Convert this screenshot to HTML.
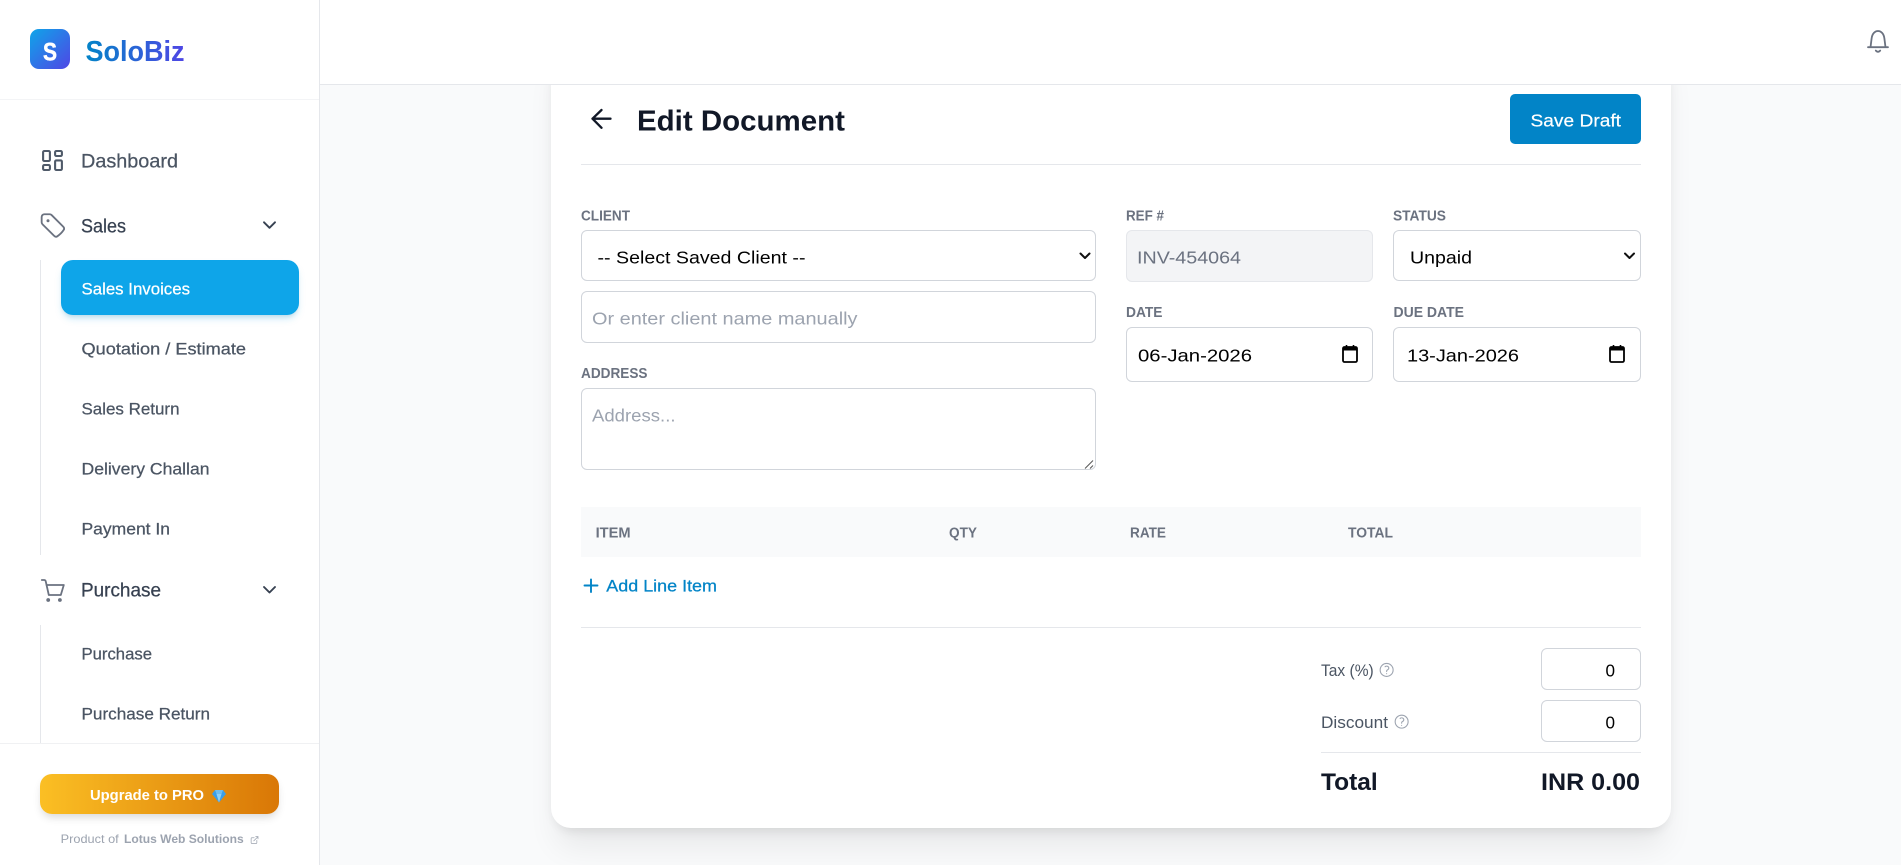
<!DOCTYPE html>
<html lang="en">
<head>
<meta charset="utf-8">
<title>Edit Document - SoloBiz</title>
<style>
html,body{margin:0;padding:0;width:1901px;height:865px;overflow:hidden;background:#f9fafb}
body{position:relative;font-family:"Liberation Sans",sans-serif}
div{position:absolute;box-sizing:border-box}
svg{position:absolute;left:0;top:0}
text{font-family:"Liberation Sans",sans-serif}
.f{background:#fff;border:1.25px solid #d1d5db;border-radius:6px}
.t{fill:#000;font-size:17.4px}
.ph{fill:#9ca3af;font-size:17.4px}
.l{fill:#6b7280;font-size:14.4px;font-weight:700}
.n{font-size:19.2px;fill:#4b5563;stroke:#4b5563;stroke-width:.25}
.s{font-size:16.8px;fill:#4b5563;stroke:#4b5563;stroke-width:.25}
</style>
</head>
<body>
<div style="left:551px;top:40px;width:1120px;height:788px;background:#fff;border-radius:20px;box-shadow:0 25px 31px -6px rgba(0,0,0,.07),0 10px 12px -7px rgba(0,0,0,.07),0 0 12px rgba(0,0,0,.04)"></div>
<div style="left:320px;top:0;width:1581px;height:85px;background:#fff;border-bottom:1.25px solid #e5e7eb"></div>
<div style="left:0;top:0;width:320px;height:865px;background:#fff;border-right:1.25px solid #e5e7eb"></div>
<div style="left:0;top:99px;width:319px;height:1px;background:#f3f4f6"></div>
<div style="left:0;top:743px;width:319px;height:1px;background:#f0f1f3"></div>
<div style="left:40px;top:260px;width:1px;height:295px;background:#e5e7eb"></div>
<div style="left:40px;top:625px;width:1px;height:118px;background:#e5e7eb"></div>
<div style="left:30px;top:29px;width:40px;height:40px;border-radius:9px;background:linear-gradient(135deg,#0ea5e9,#4f46e5)"></div>
<div style="left:61px;top:260px;width:238px;height:55px;border-radius:12px;background:#0ea5e9;box-shadow:0 5px 8px -2px rgba(14,165,233,.25),0 3px 5px -2px rgba(0,0,0,.1)"></div>
<div style="left:40px;top:774px;width:239px;height:40px;border-radius:12px;background:linear-gradient(90deg,#fbbf24,#d97706);box-shadow:0 5px 9px -2px rgba(0,0,0,.16)"></div>

<div style="left:581px;top:164px;width:1060px;height:1px;background:#e5e7eb"></div>
<div style="left:1510px;top:94px;width:131px;height:50px;background:#0284c7;border-radius:5px"></div>
<div class="f" style="left:581px;top:230px;width:515px;height:51px"></div>
<div class="f" style="left:581px;top:291px;width:515px;height:52px"></div>
<div class="f" style="left:581px;top:388px;width:515px;height:82px"></div>
<div class="f" style="left:1126px;top:230px;width:247px;height:52px;background:#f3f4f6;border-color:#e5e7eb"></div>
<div class="f" style="left:1393px;top:230px;width:248px;height:51px"></div>
<div class="f" style="left:1126px;top:327px;width:247px;height:55px"></div>
<div class="f" style="left:1393px;top:327px;width:248px;height:55px"></div>
<div style="left:581px;top:507px;width:1060px;height:50px;background:#f9fafb"></div>
<div style="left:581px;top:627px;width:1060px;height:1px;background:#e5e7eb"></div>
<div class="f" style="left:1541px;top:648px;width:100px;height:42px"></div>
<div class="f" style="left:1541px;top:700px;width:100px;height:42px"></div>
<div style="left:1321px;top:752px;width:320px;height:1px;background:#e5e7eb"></div>

<svg width="1901" height="865" viewBox="0 0 1901 865" xmlns="http://www.w3.org/2000/svg">
<defs>
<linearGradient id="lg" gradientUnits="userSpaceOnUse" x1="85" y1="0" x2="185" y2="0"><stop offset="0" stop-color="#0284c7"/><stop offset="1" stop-color="#4f46e5"/></linearGradient>
</defs>

<!-- Brand -->
<text x="43" y="60.3" font-size="25" font-weight="700" fill="#fff" stroke="#fff" stroke-width=".5" textLength="14" lengthAdjust="spacingAndGlyphs">S</text>
<text x="85.5" y="61" font-size="29" font-weight="700" fill="url(#lg)" textLength="99" lengthAdjust="spacingAndGlyphs">SoloBiz</text>

<!-- Nav -->
<g fill="none" stroke="#4f5a69" stroke-width="2.1">
<rect x="43.1" y="151" width="6.8" height="10" rx="1.2"/>
<rect x="43.1" y="165" width="6.8" height="5" rx="1.2"/>
<rect x="55.1" y="151" width="6.8" height="5" rx="1.2"/>
<rect x="55.1" y="160.4" width="6.8" height="9.6" rx="1.2"/>
</g>
<text class="n" x="81" y="167.5" textLength="97" lengthAdjust="spacingAndGlyphs">Dashboard</text>

<g transform="translate(38 210.6) scale(1.22)" fill="none" stroke="#6b7280" stroke-width="1.5" stroke-linecap="round" stroke-linejoin="round"><path d="M9.568 3H5.25A2.25 2.25 0 003 5.25v4.318c0 .597.237 1.17.659 1.591l9.581 9.581c.699.699 1.78.872 2.607.33a18.095 18.095 0 005.223-5.223c.542-.827.369-1.908-.33-2.607L11.16 3.66A2.25 2.25 0 009.568 3z"/></g>
<circle cx="48" cy="220.7" r="1.5" fill="#6b7280"/>
<text class="n" x="81" y="232.7" textLength="45" lengthAdjust="spacingAndGlyphs" style="fill:#374151;stroke:#374151">Sales</text>
<path d="M264 222.3l5.5 5.5 5.5-5.5" fill="none" stroke="#374151" stroke-width="1.9" stroke-linecap="round" stroke-linejoin="round"/>

<text class="s" x="81.5" y="294.6" textLength="108.5" lengthAdjust="spacingAndGlyphs" style="fill:#fff;stroke:#fff">Sales Invoices</text>
<text class="s" x="81.5" y="354.6" textLength="164.5" lengthAdjust="spacingAndGlyphs">Quotation / Estimate</text>
<text class="s" x="81.5" y="414.6" textLength="98" lengthAdjust="spacingAndGlyphs">Sales Return</text>
<text class="s" x="81.5" y="474.6" textLength="128" lengthAdjust="spacingAndGlyphs">Delivery Challan</text>
<text class="s" x="81.5" y="534.6" textLength="88.5" lengthAdjust="spacingAndGlyphs">Payment In</text>

<g fill="none" stroke="#6b7280" stroke-width="1.8" stroke-linecap="round" stroke-linejoin="round"><path d="M41.8 580h2.4c.8 0 1.3.5 1.5 1.2L48.8 595H60.8L63.8 585H46.4"/></g>
<circle cx="48.2" cy="600" r="1.9" fill="#6b7280"/><circle cx="59.9" cy="600" r="1.9" fill="#6b7280"/>
<text class="n" x="81" y="596.6" textLength="80" lengthAdjust="spacingAndGlyphs" style="fill:#374151;stroke:#374151">Purchase</text>
<path d="M264 587l5.5 5.5 5.5-5.5" fill="none" stroke="#374151" stroke-width="1.9" stroke-linecap="round" stroke-linejoin="round"/>

<text class="s" x="81.5" y="659.6" textLength="70.5" lengthAdjust="spacingAndGlyphs">Purchase</text>
<text class="s" x="81.5" y="719.6" textLength="128.5" lengthAdjust="spacingAndGlyphs">Purchase Return</text>

<!-- Sidebar footer -->
<text x="90" y="800.2" font-size="15" font-weight="700" fill="#fff" textLength="114" lengthAdjust="spacingAndGlyphs">Upgrade to PRO</text>
<g>
<polygon points="215,790 223,790 226,794 219,802.5 212,794" fill="#3b9ee8"/>
<polygon points="216.5,794 221.5,794 219,802.5" fill="#8fd0f7"/>
<polygon points="215,790 223,790 221.5,794 216.5,794" fill="#6fbdf0"/>
</g>
<text x="60.7" y="843" font-size="12" fill="#9ca3af" textLength="58" lengthAdjust="spacingAndGlyphs">Product of</text>
<text x="124" y="843" font-size="12" font-weight="700" fill="#9ca3af" textLength="119.7" lengthAdjust="spacingAndGlyphs">Lotus Web Solutions</text>
<g transform="translate(250 835.5) scale(.38)" fill="none" stroke="#9ca3af" stroke-width="2" stroke-linecap="round" stroke-linejoin="round"><path d="M18 13v6a2 2 0 01-2 2H5a2 2 0 01-2-2V8a2 2 0 012-2h6"/><path d="M15 3h6v6"/><path d="M10 14L21 3"/></g>

<!-- Bell -->
<path d="M1868 47.2H1888M1870.6 46.5L1871.6 38.5C1872.2 33.5 1875 31 1878 31S1883.8 33.5 1884.4 38.5L1885.4 46.5M1875.8 50.6Q1878 53 1880.2 50.6" fill="none" stroke="#6b7280" stroke-width="1.8" stroke-linecap="round" stroke-linejoin="round"/>

<!-- Title row -->
<path d="M610.5 118.7H592.5M601.5 110L592.5 118.7L601.5 127.8" fill="none" stroke="#111827" stroke-width="2.3" stroke-linecap="round" stroke-linejoin="round"/>
<text x="637" y="130.5" font-size="29" font-weight="700" fill="#111827" textLength="208" lengthAdjust="spacingAndGlyphs">Edit Document</text>
<text x="1530.5" y="126.6" font-size="17.4" fill="#fff" stroke="#fff" stroke-width=".2" textLength="90.5" lengthAdjust="spacingAndGlyphs">Save Draft</text>

<!-- Labels -->
<text class="l" x="581" y="220.6" textLength="49" lengthAdjust="spacingAndGlyphs">CLIENT</text>
<text class="l" x="581" y="378" textLength="66.5" lengthAdjust="spacingAndGlyphs">ADDRESS</text>
<text class="l" x="1126" y="220.6" textLength="38" lengthAdjust="spacingAndGlyphs">REF #</text>
<text class="l" x="1393" y="220.6" textLength="53" lengthAdjust="spacingAndGlyphs">STATUS</text>
<text class="l" x="1126" y="317" textLength="36.5" lengthAdjust="spacingAndGlyphs">DATE</text>
<text class="l" x="1393.5" y="317" textLength="70.5" lengthAdjust="spacingAndGlyphs">DUE DATE</text>

<!-- Field values -->
<text class="t" x="597.5" y="263.6" textLength="208" lengthAdjust="spacingAndGlyphs">-- Select Saved Client --</text>
<path d="M1080.5 253.5l4.5 4.5 4.5-4.5" fill="none" stroke="#111" stroke-width="2" stroke-linecap="round" stroke-linejoin="round"/>
<text class="ph" x="592" y="324.6" textLength="265.5" lengthAdjust="spacingAndGlyphs">Or enter client name manually</text>
<text class="ph" x="592" y="421.5" textLength="83.5" lengthAdjust="spacingAndGlyphs">Address...</text>
<path d="M1085 468.5l8-8M1090 468.5l3-3" stroke="#555" stroke-width="1" fill="none"/>
<text class="t" x="1137" y="263.6" textLength="104" lengthAdjust="spacingAndGlyphs" style="fill:#6b7280">INV-454064</text>
<text class="t" x="1410" y="263.6" textLength="62" lengthAdjust="spacingAndGlyphs">Unpaid</text>
<path d="M1625 253.5l4.5 4.5 4.5-4.5" fill="none" stroke="#111" stroke-width="2" stroke-linecap="round" stroke-linejoin="round"/>
<text class="t" x="1138" y="361.6" textLength="114" lengthAdjust="spacingAndGlyphs">06-Jan-2026</text>
<text class="t" x="1407" y="361.6" textLength="112" lengthAdjust="spacingAndGlyphs">13-Jan-2026</text>
<g fill="none" stroke="#000"><rect x="1343" y="347" width="14" height="15" rx="1.5" stroke-width="1.8"/><rect x="1343" y="347" width="14" height="3.5" fill="#000" stroke="none"/><path d="M1346.5 345v3M1353.5 345v3" stroke-width="1.6"/></g>
<g fill="none" stroke="#000"><rect x="1610" y="347" width="14" height="15" rx="1.5" stroke-width="1.8"/><rect x="1610" y="347" width="14" height="3.5" fill="#000" stroke="none"/><path d="M1613.5 345v3M1620.5 345v3" stroke-width="1.6"/></g>

<!-- Table -->
<text class="l" x="595.6" y="537.5" textLength="35" lengthAdjust="spacingAndGlyphs">ITEM</text>
<text class="l" x="949" y="537.5" textLength="28" lengthAdjust="spacingAndGlyphs">QTY</text>
<text class="l" x="1130" y="537.5" textLength="36" lengthAdjust="spacingAndGlyphs">RATE</text>
<text class="l" x="1348" y="537.5" textLength="45" lengthAdjust="spacingAndGlyphs">TOTAL</text>
<path d="M584.5 585.5h13M591 579.5v12.5" stroke="#0284c7" stroke-width="1.9" stroke-linecap="round" fill="none"/>
<text x="606.3" y="591.5" font-size="16.8" fill="#0284c7" stroke="#0284c7" stroke-width=".25" textLength="110.7" lengthAdjust="spacingAndGlyphs">Add Line Item</text>

<!-- Totals -->
<text x="1321" y="676" font-size="16.8" fill="#4b5563" textLength="52.7" lengthAdjust="spacingAndGlyphs">Tax (%)</text>
<text x="1321" y="728" font-size="16.8" fill="#4b5563" textLength="67" lengthAdjust="spacingAndGlyphs">Discount</text>
<g transform="translate(1378 661.3) scale(.72)" fill="none" stroke="#9ca3af" stroke-width="1.5" stroke-linecap="round" stroke-linejoin="round"><path d="M9.879 7.519c1.171-1.025 3.071-1.025 4.242 0 1.172 1.025 1.172 2.687 0 3.712-.203.179-.43.326-.67.442-.745.361-1.45.999-1.45 1.827v.75M21 12a9 9 0 11-18 0 9 9 0 0118 0zm-9 5.25h.008v.008H12v-.008z"/></g>
<g transform="translate(1393 713) scale(.72)" fill="none" stroke="#9ca3af" stroke-width="1.5" stroke-linecap="round" stroke-linejoin="round"><path d="M9.879 7.519c1.171-1.025 3.071-1.025 4.242 0 1.172 1.025 1.172 2.687 0 3.712-.203.179-.43.326-.67.442-.745.361-1.45.999-1.45 1.827v.75M21 12a9 9 0 11-18 0 9 9 0 0118 0zm-9 5.25h.008v.008H12v-.008z"/></g>
<text class="t" x="1605.5" y="676.3" textLength="9.5" lengthAdjust="spacingAndGlyphs">0</text>
<text class="t" x="1605.5" y="728.3" textLength="9.5" lengthAdjust="spacingAndGlyphs">0</text>
<text x="1321" y="790" font-size="24" font-weight="700" fill="#111827" textLength="56.7" lengthAdjust="spacingAndGlyphs">Total</text>
<text x="1541" y="790" font-size="24" font-weight="700" fill="#111827" textLength="99" lengthAdjust="spacingAndGlyphs">INR 0.00</text>
</svg>
</body>
</html>
